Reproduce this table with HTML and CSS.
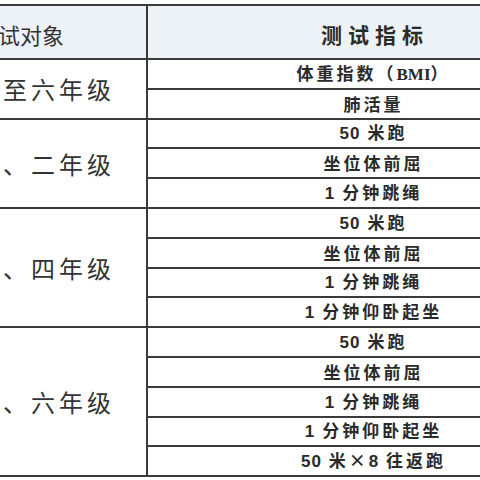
FILE: index.html
```html
<!DOCTYPE html>
<html lang="zh-CN">
<head>
<meta charset="utf-8">
<link rel="stylesheet" href="styles.css">
</head>
<body>
<div class="sheet">
<table class="grid">
  <colgroup><col class="c-left"><col class="c-right"></colgroup>
  <tr class="head">
    <th class="h-left">测试对象</th>
    <th class="h-right">测试指标</th>
  </tr>
  <tr><td class="grade" rowspan="2">一至六年级</td><td class="item">体重指数（<span class="latin">BMI</span>）</td></tr>
  <tr><td class="item">肺活量</td></tr>
  <tr><td class="grade" rowspan="3">一、二年级</td><td class="item"><span class="num">50</span> 米跑</td></tr>
  <tr><td class="item">坐位体前屈</td></tr>
  <tr><td class="item"><span class="num">1</span> 分钟跳绳</td></tr>
  <tr><td class="grade" rowspan="4">三、四年级</td><td class="item"><span class="num">50</span> 米跑</td></tr>
  <tr><td class="item">坐位体前屈</td></tr>
  <tr><td class="item"><span class="num">1</span> 分钟跳绳</td></tr>
  <tr><td class="item"><span class="num">1</span> 分钟仰卧起坐</td></tr>
  <tr><td class="grade" rowspan="5">五、六年级</td><td class="item"><span class="num">50</span> 米跑</td></tr>
  <tr><td class="item">坐位体前屈</td></tr>
  <tr><td class="item"><span class="num">1</span> 分钟跳绳</td></tr>
  <tr><td class="item"><span class="num">1</span> 分钟仰卧起坐</td></tr>
  <tr><td class="item"><span class="num">50</span> 米×<span class="num">8</span> 往返跑</td></tr>
</table>
</div>
</body>
</html>
```
FILE: styles.css
```css
html, body {
  margin: 0;
  padding: 0;
  background: #ffffff;
}
body {
  width: 480px;
  height: 480px;
  overflow: hidden;
}
.sheet {
  padding-top: 4px;
  margin-left: -58px;
  width: 654px;
}
.grid {
  border-collapse: collapse;
  table-layout: fixed;
  width: 654px;
  font-family: "Noto Sans CJK SC", sans-serif;
  color: #2a2a2a;
}
.c-left { width: 204px; }
.c-right { width: 450px; }
.grid th, .grid td {
  border: 2px solid #3a3a3a;
  padding: 0;
  vertical-align: middle;
}
.head th {
  height: 54px;
  background: #edf2f7;
  font-weight: 400;
  padding-top: 4px;
  box-sizing: border-box;
}
.grid .h-left {
  text-align: left;
  padding-left: 32px;
  font-size: 22px;
  color: #333;
}
.grid .h-right {
  text-align: center;
  font-size: 21px;
  letter-spacing: 6px;
  text-indent: 6px;
  font-weight: 700;
  color: #2a2a2a;
}
.grid tr:not(.head) td.item {
  height: 27.8px;
  text-align: center;
  font-size: 17px;
  font-weight: 700;
  letter-spacing: 3px;
  text-indent: 3px;
  line-height: 20px;
}
.grid .grade {
  text-align: left;
  padding-left: 31px;
  font-size: 24px;
  letter-spacing: 4px;
  font-weight: 400;
  color: #333;
}
.num {
  font-family: "Liberation Sans", sans-serif;
  letter-spacing: 1px;
}
.latin {
  font-family: "Liberation Serif", serif;
  letter-spacing: 0;
}
```
